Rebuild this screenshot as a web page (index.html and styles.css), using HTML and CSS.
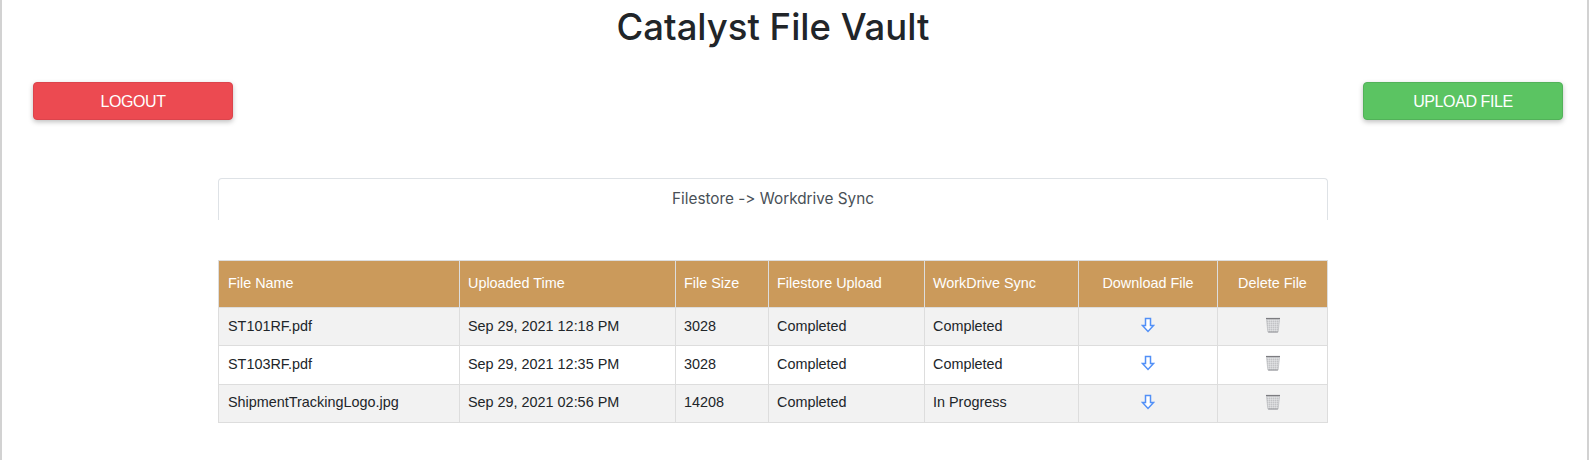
FILE: index.html
```html
<!DOCTYPE html>
<html lang="en">
<head>
    <meta charset="UTF-8">
    <meta name="viewport" content="width=device-width, initial-scale=1.0">
    <title>Catalyst File Vault</title>
    <link rel="stylesheet" href="styles.css">
</head>
<body>
    <svg class="defs" width="0" height="0" aria-hidden="true">
        <defs>
            <pattern id="mesh" width="2" height="2" patternUnits="userSpaceOnUse">
                <rect width="2" height="2" fill="#d4d5d7"/>
                <rect width="1" height="1" fill="#c2c3c6"/>
                <rect x="1" y="1" width="1" height="1" fill="#dfe0e2"/>
            </pattern>
            <symbol id="icon-down" viewBox="0 0 14 16">
                <path d="M4.500 1.500h5v7h3L7 14.500 1.500 8.500h3z" fill="#fff" stroke="#5290f7" stroke-width="1.500" stroke-linejoin="miter"/>
            </symbol>
            <symbol id="icon-trash" viewBox="0 0 16 16">
                <path d="M1.500 2.400h13l-1.300 12.100q-.1 1-1 1H3.800q-.9 0-1-1z" fill="url(#mesh)" stroke="#b4b5b8" stroke-width=".6"/>
                <path d="M1 1.500h14" stroke="#7c7c80" stroke-width="1.200"/>
                <path d="M3.200 14.900h9.600" stroke="#a0a1a5" stroke-width="1"/>
            </symbol>
        </defs>
    </svg>

    <h1 class="page-title">Catalyst File Vault</h1>

    <div class="actions">
        <button class="btn btn-logout">LOGOUT</button>
        <button class="btn btn-upload">UPLOAD FILE</button>
    </div>

    <div class="panel">
        <div class="panel-title">Filestore -&gt; Workdrive Sync</div>

        <table class="files">
            <thead>
                <tr>
                    <th class="col-name">File Name</th>
                    <th class="col-time">Uploaded Time</th>
                    <th class="col-size">File Size</th>
                    <th class="col-upload">Filestore Upload</th>
                    <th class="col-sync">WorkDrive Sync</th>
                    <th class="col-download center">Download File</th>
                    <th class="col-delete center">Delete File</th>
                </tr>
            </thead>
            <tbody>
                <tr>
                    <td>ST101RF.pdf</td>
                    <td>Sep 29, 2021 12:18 PM</td>
                    <td>3028</td>
                    <td>Completed</td>
                    <td>Completed</td>
                    <td class="center"><svg class="icon icon-down"><use href="#icon-down"/></svg></td>
                    <td class="center"><svg class="icon icon-trash"><use href="#icon-trash"/></svg></td>
                </tr>
                <tr>
                    <td>ST103RF.pdf</td>
                    <td>Sep 29, 2021 12:35 PM</td>
                    <td>3028</td>
                    <td>Completed</td>
                    <td>Completed</td>
                    <td class="center"><svg class="icon icon-down"><use href="#icon-down"/></svg></td>
                    <td class="center"><svg class="icon icon-trash"><use href="#icon-trash"/></svg></td>
                </tr>
                <tr>
                    <td>ShipmentTrackingLogo.jpg</td>
                    <td>Sep 29, 2021 02:56 PM</td>
                    <td>14208</td>
                    <td>Completed</td>
                    <td>In Progress</td>
                    <td class="center"><svg class="icon icon-down"><use href="#icon-down"/></svg></td>
                    <td class="center"><svg class="icon icon-trash"><use href="#icon-trash"/></svg></td>
                </tr>
            </tbody>
        </table>
    </div>
</body>
</html>
```

FILE: styles.css
```css
* {
    box-sizing: border-box;
}
html {
    height: 100%;
}
body {
    font-family: "Liberation Sans", Arial, sans-serif;
    color: #212529;
    background: #fff;
    margin: 0;
    height: 460px;
    overflow: hidden;
    border-left: 2px solid #d2d2d2;
    border-right: 2px solid #d2d2d2;
}
.defs {
    position: absolute;
}
.page-title {
    width: 1110px;
    margin: 0 0 0 216px;
    padding-top: 4px;
    height: 82px;
    font-family: Inter, "Liberation Sans", sans-serif;
    font-size: 36.500px;
    font-weight: 500;
    line-height: 46px;
    text-align: center;
    color: #212529;
}
.actions {
    display: flex;
    justify-content: space-between;
    padding: 0 24px 0 31px;
}
.btn {
    width: 200px;
    height: 38px;
    padding: 1px 0 0;
    border: 1px solid transparent;
    border-radius: 4px;
    color: #fff;
    font-family: "Liberation Sans", Arial, sans-serif;
    font-size: 16px;
    letter-spacing: -0.400px;
    box-shadow: 0 2px 5px rgba(0,0,0,0.25);
}
.btn-logout {
    background: #ec4a51;
    border-color: #dc444c;
}
.btn-upload {
    background: #5bc462;
    border-color: #52b259;
}
.panel {
    width: 1110px;
    margin: 58px 0 0 216px;
}
.panel-title {
    height: 42px;
    padding-top: 10px;
    border: 1px solid #dee2e6;
    border-bottom: none;
    border-radius: 4px 4px 0 0;
    font-family: Inter, "Liberation Sans", sans-serif;
    font-size: 15.300px;
    font-variant-ligatures: none;
    font-feature-settings: "calt" 0;
    line-height: 20px;
    text-align: center;
    color: #495057;
}
.files {
    width: 1110px;
    margin-top: 40px;
    border-collapse: collapse;
    table-layout: fixed;
    font-size: 14.400px;
}
.files th,
.files td {
    border: 1px solid #ddd;
    padding: 0 8px 2px;
    text-align: left;
    font-weight: normal;
}
.files th:first-child,
.files td:first-child {
    padding-left: 9px;
}
.files th {
    height: 47px;
    background: #cb9a5b;
    color: #fff;
}
.files td {
    height: 38.300px;
    color: #212529;
}
.files tbody tr:nth-child(odd) {
    background: #f2f2f2;
}
.files .center {
    text-align: center;
}
.col-name { width: 241px; }
.col-time { width: 216px; }
.col-size { width: 93px; }
.col-upload { width: 156px; }
.col-sync { width: 154px; }
.col-download { width: 139px; }
.icon {
    display: block;
    margin: 0 auto 1px;
}
.icon-down {
    width: 14px;
    height: 16px;
}
.icon-trash {
    width: 16px;
    height: 16px;
}
```
